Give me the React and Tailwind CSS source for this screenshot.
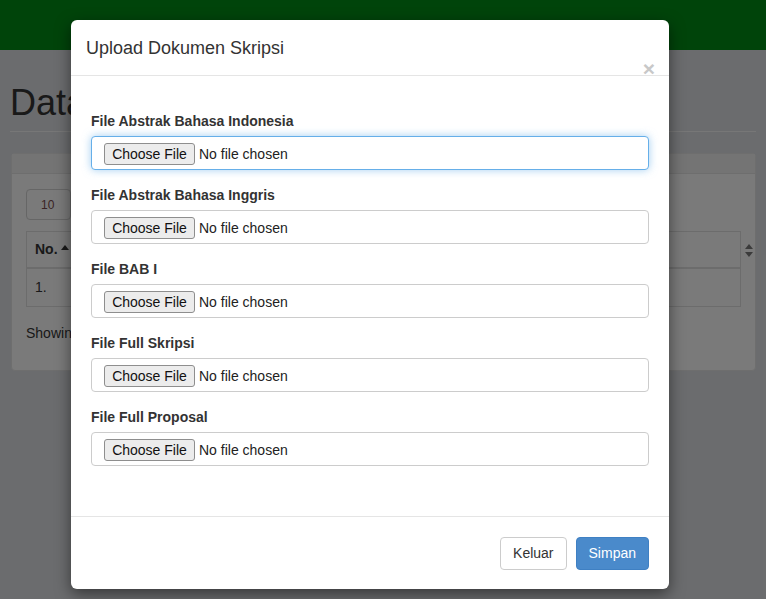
import React from "react";

const fields = [
  "File Abstrak Bahasa Indonesia",
  "File Abstrak Bahasa Inggris",
  "File BAB I",
  "File Full Skripsi",
  "File Full Proposal",
];

function FileInput({ focused }) {
  return (
    <div
      className={
        focused
          ? "h-[34px] flex items-center pt-[1px] px-3 bg-white rounded-[4px] border border-[#66afe9] shadow-[0_0_8px_rgba(102,175,233,0.6)]"
          : "h-[34px] flex items-center pt-[1px] px-3 bg-white rounded-[4px] border border-[#cccccc]"
      }
    >
      <span className="w-[91px] h-[22px] flex items-center justify-center rounded-[3px] border border-[#8e8e8e] bg-[#ececec] text-[14px] text-[#111] leading-none">
        Choose File
      </span>
      <span className="ml-[4px] text-[14px] text-[#222] leading-none">No file chosen</span>
    </div>
  );
}

export default function App() {
  return (
    <div
      className="relative w-[766px] h-[599px] overflow-hidden bg-[#d7d9dc]"
      style={{ fontFamily: '"Liberation Sans", Arial, sans-serif' }}
    >
      {/* background page */}
      <div className="h-[50px] bg-[#008814]" />
      <div className="px-[10px]">
        <h1 className="mt-[33px] h-[40px] text-[36px] leading-[40px] text-[#333]">Data</h1>
        <div className="mt-[8px] border-t border-[#eeeeee]" />
        <div className="mt-[21px] ml-[1px] h-[218px] bg-[#f4f4f4] border border-[#dddddd] rounded-[4px]">
          <div className="h-[20px] bg-[#e8e8e8] border-b border-[#dddddd]" />
          <div className="px-[14px]">
            <div className="mt-[15px] w-[45px] h-[31px] border border-[#cccccc] rounded-[4px] flex items-center pl-[14px] text-[12px] text-[#744848]">
              10
            </div>
            <div className="mt-[11px] border border-[#d8d8d8]">
              <div className="h-[37px] border-b-2 border-[#d8d8d8] flex items-center pl-[8px] relative">
                <span className="text-[14px] font-bold text-[#333]">No.</span>
                <svg className="ml-[3px] -mt-[5px]" width="8" height="5" viewBox="0 0 8 5">
                  <path d="M0 5 L4 0 L8 5 Z" fill="#333" />
                </svg>
                <svg className="absolute left-[718px] top-[12px]" width="8" height="13" viewBox="0 0 8 13">
                  <path d="M0 5 L4 0 L8 5 Z M0 8 L4 13 L8 8 Z" fill="#777" />
                </svg>
                <div className="absolute left-[733px] top-0 bottom-0 border-l border-[#d8d8d8]" />
              </div>
              <div className="h-[37px] flex items-center pl-[8px] relative">
                <span className="text-[14px] text-[#333]">1.</span>
                <div className="absolute left-[733px] top-0 bottom-0 border-l border-[#d8d8d8]" />
              </div>
            </div>
            <div className="mt-[16px] text-[14px] text-[#333]">Showing</div>
          </div>
        </div>
      </div>

      {/* modal backdrop */}
      <div className="absolute inset-0 bg-black/50" />

      {/* modal */}
      <div className="absolute left-[71px] top-[20px] w-[598px] bg-white rounded-[6px] shadow-[0_5px_15px_rgba(0,0,0,0.5)]">
        <div className="relative h-[56px] border-b border-[#e5e5e5] px-[15px] flex items-center">
          <h4 className="text-[18px] leading-[26px] text-[#333]">Upload Dokumen Skripsi</h4>
          <span className="absolute right-[14px] top-[38px] text-[21px] leading-[21px] font-bold text-[#c8c8c8]">
            ×
          </span>
        </div>
        <div className="px-[20px] pt-[35px] pb-[35px]">
          {fields.map((f, i) => (
            <div key={f} className="mb-[15px]">
              <div className="h-[20px] mb-[5px] text-[14px] leading-[20px] font-bold text-[#333]">{f}</div>
              <FileInput focused={i === 0} />
            </div>
          ))}
        </div>
        <div className="border-t border-[#e5e5e5] pt-[20px] pb-[19px] px-[20px] flex justify-end gap-[9px]">
          <button className="h-[33px] px-[12px] rounded-[4px] border border-[#cccccc] bg-white text-[14px] text-[#333]">
            Keluar
          </button>
          <button className="h-[33px] px-[12px] rounded-[4px] border border-[#3f80c3] bg-[#4a8acb] text-[14px] text-white">
            Simpan
          </button>
        </div>
      </div>
    </div>
  );
}
